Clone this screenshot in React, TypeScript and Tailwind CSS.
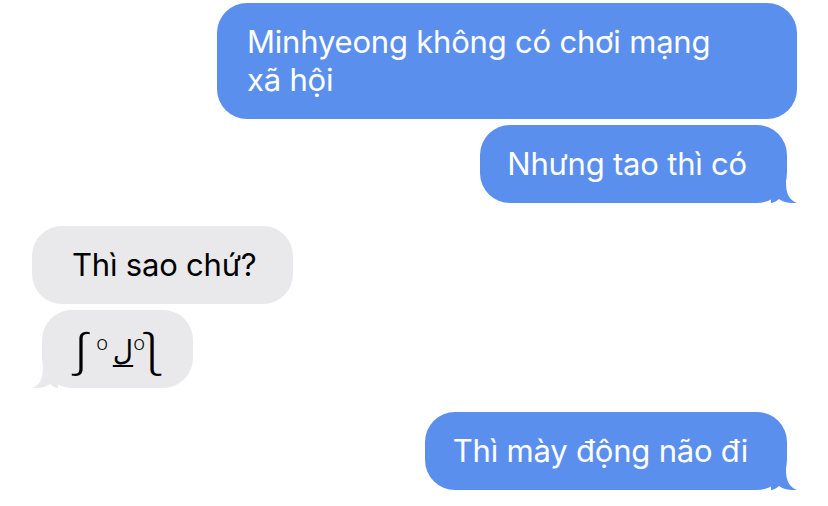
import React from "react";

const BLUE = "bg-[#5b8fee]";

function TailRight() {
  return (
    <svg
      className="absolute bottom-0 right-[-10px]"
      width="26"
      height="32"
      viewBox="0 0 26 32"
    >
      <path
        d="M0 0 H15 V12 C15 22 18 29 26 32 C18 32.5 12 31 8 28 C5 30.5 2 32 0 32 Z"
        fill="#5b8fee"
      />
    </svg>
  );
}

function TailLeft() {
  return (
    <svg
      className="absolute bottom-0 left-[-10px] -scale-x-100"
      width="26"
      height="32"
      viewBox="0 0 26 32"
    >
      <path
        d="M0 0 H15 V12 C15 22 18 29 26 32 C18 32.5 12 31 8 28 C5 30.5 2 32 0 32 Z"
        fill="#e9e9eb"
      />
    </svg>
  );
}

export default function App() {
  return (
    <div className="w-[828px] h-[506px] bg-white overflow-hidden font-['Inter','Noto_Sans',sans-serif] text-[31px] leading-[38px] tracking-[-0.2px]">
      <div className="flex flex-col pt-[3px] pl-8 pr-[31px]">
        {/* tin nhắn gửi đi */}
        <div
          className={`self-end w-[580px] rounded-[30px] ${BLUE} px-[30px] py-[20px] text-white`}
        >
          Minhyeong không có chơi mạng
          <br />
          xã hội
        </div>

        <div
          className={`relative self-end mt-[6px] mr-[10px] rounded-[30px] ${BLUE} pl-[27px] pr-[40px] py-[20px] text-white`}
        >
          Nhưng tao thì có
          <TailRight />
        </div>

        {/* tin nhắn nhận */}
        <div className="self-start mt-[23px] rounded-[30px] bg-[#e9e9eb] pl-[40px] pr-[37px] py-[20px] text-black">
          Thì sao chứ?
        </div>

        <div className="relative self-start mt-[6px] ml-[10px] rounded-[30px] bg-[#e9e9eb] pl-[31px] pr-[33px] py-[20px] text-black">
          <span className="flex items-center w-[87px] h-[38px] leading-none font-['Noto_Sans',sans-serif] font-light">
            <span className="flex justify-center w-[16px]">
              <span className="inline-block text-[44px] scale-x-[1.3]">ʃ</span>
            </span>
            <span className="flex justify-center w-[12px] ml-[7px] text-[20px] -mt-[12px]">
              o
            </span>
            <span className="flex justify-center w-[20px] ml-[5px] mt-[4px] font-['DejaVu_Sans',sans-serif] font-normal text-[28px] underline decoration-[1.5px] underline-offset-[5px]">
              ل
            </span>
            <span className="flex justify-center w-[12px] text-[20px] -mt-[12px]">
              o
            </span>
            <span className="flex justify-center w-[16px] ml-[-1px]">
              <span className="inline-block text-[44px] scale-x-[-1.3]">ʃ</span>
            </span>
          </span>
          <TailLeft />
        </div>

        <div
          className={`relative self-end mt-[24px] mr-[10px] rounded-[30px] ${BLUE} pl-[28px] pr-[39px] py-[20px] text-white`}
        >
          Thì mày động não đi
          <TailRight />
        </div>
      </div>
    </div>
  );
}
